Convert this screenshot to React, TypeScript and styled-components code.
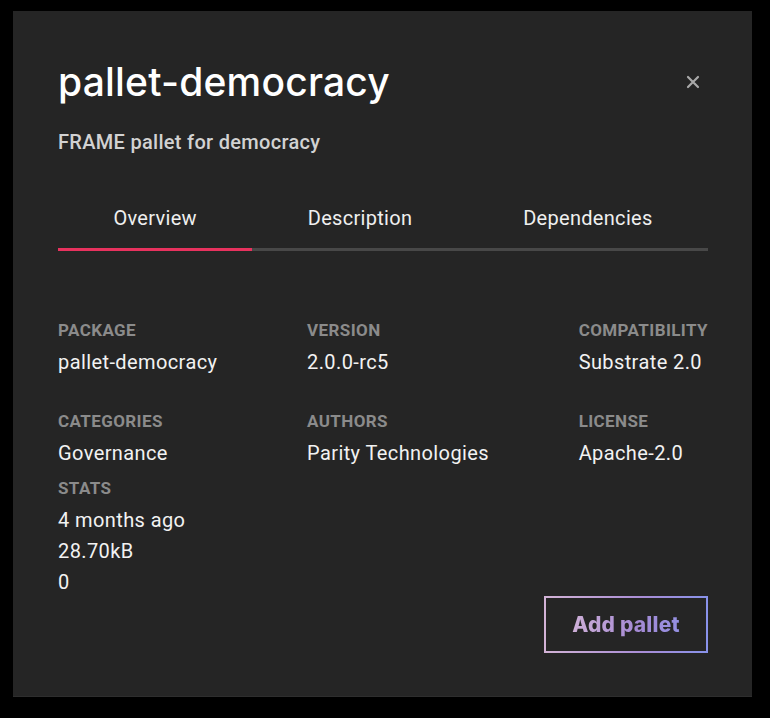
import React, { useState } from "react";
import styled, { createGlobalStyle } from "styled-components";

const GlobalStyle = createGlobalStyle`
  html, body {
    margin: 0;
    padding: 0;
    background: #000;
  }
  * {
    box-sizing: border-box;
  }
`;

const tabs = ["Overview", "Description", "Dependencies"];

const fields = [
  { label: "Package", value: "pallet-democracy" },
  { label: "Version", value: "2.0.0-rc5" },
  { label: "Compatibility", value: "Substrate 2.0" },
  { label: "Categories", value: "Governance" },
  { label: "Authors", value: "Parity Technologies" },
  { label: "License", value: "Apache-2.0" },
];

const stats = ["4 months ago", "28.70kB", "0"];

const App: React.FC = () => {
  const [active, setActive] = useState(0);

  return (
    <Page>
      <GlobalStyle />
      <Modal>
        <Header>
          <Title>pallet-democracy</Title>
          <CloseButton aria-label="close">
            <svg width="14" height="14" viewBox="0 0 14 14">
              <path
                d="M2 2 L12 12 M12 2 L2 12"
                stroke="#a9a9a9"
                strokeWidth="2.2"
                strokeLinecap="round"
              />
            </svg>
          </CloseButton>
        </Header>
        <Subtitle>FRAME pallet for democracy</Subtitle>

        <TabBar>
          {tabs.map((t, i) => (
            <Tab key={t} $active={i === active} onClick={() => setActive(i)}>
              {t}
            </Tab>
          ))}
        </TabBar>

        <InfoGrid>
          {fields.map((f) => (
            <Field key={f.label}>
              <FieldLabel>{f.label}</FieldLabel>
              <FieldValue>{f.value}</FieldValue>
            </Field>
          ))}
        </InfoGrid>

        <Footer>
          <Field>
            <FieldLabel>Stats</FieldLabel>
            {stats.map((s) => (
              <FieldValue key={s}>{s}</FieldValue>
            ))}
          </Field>
          <AddButton>
            <ButtonText>Add pallet</ButtonText>
          </AddButton>
        </Footer>
      </Modal>
    </Page>
  );
};

export default App;

// Styled Components
const Page = styled.div`
  width: 770px;
  height: 718px;
  padding: 11px 18px 21px 13px;
  background: #000;
`;

const Modal = styled.div`
  display: flex;
  flex-direction: column;
  width: 739px;
  height: 686px;
  background: #252525;
  border-bottom: 1px solid #2e2e2e;
  padding: 45px 44px 43px 45px;
  font-family: Roboto, "Liberation Sans", sans-serif;
`;

const Header = styled.div`
  display: flex;
  justify-content: space-between;
  align-items: center;
`;

const Title = styled.h1`
  margin: 0;
  font-family: Inter, "Noto Sans", sans-serif;
  font-size: 39px;
  font-weight: 500;
  letter-spacing: 0.2px;
  line-height: 52px;
  color: #ffffff;
`;

const CloseButton = styled.button`
  display: flex;
  align-items: center;
  justify-content: center;
  width: 28px;
  height: 28px;
  margin-right: 1px;
  padding: 0;
  border: none;
  background: transparent;
  cursor: pointer;
`;

const Subtitle = styled.div`
  margin-top: 22px;
  font-size: 20px;
  font-weight: 500;
  letter-spacing: 0.3px;
  color: #d2d2d2;
  line-height: 24px;
`;

const TabBar = styled.div`
  display: flex;
  margin-top: 39px;
  border-bottom: 3px solid #484848;
`;

const Tab = styled.button<{ $active: boolean }>`
  flex: 1 1 auto;
  padding: 13px 0 18px;
  margin-bottom: -3px;
  border: none;
  border-bottom: 3px solid ${(p) => (p.$active ? "#e8325e" : "transparent")};
  background: transparent;
  font-family: Roboto, "Liberation Sans", sans-serif;
  font-size: 20px;
  letter-spacing: 0.3px;
  line-height: 24px;
  color: #efefef;
  cursor: pointer;
`;

const InfoGrid = styled.div`
  display: grid;
  grid-template-columns: auto auto auto;
  justify-content: space-between;
  row-gap: 35px;
  margin-top: 67px;
`;

const Field = styled.div`
  display: flex;
  flex-direction: column;
  gap: 7px;
`;

const FieldLabel = styled.div`
  margin-bottom: 1px;
  font-size: 17px;
  font-weight: 700;
  letter-spacing: 0.4px;
  text-transform: uppercase;
  color: #8b8b8b;
  line-height: 24px;
`;

const FieldValue = styled.div`
  font-size: 20px;
  letter-spacing: 0.4px;
  color: #f2f2f2;
  line-height: 24px;
`;

const Footer = styled.div`
  flex: 1;
  display: flex;
  justify-content: space-between;
  align-items: flex-start;
  margin-top: 11px;
`;

const AddButton = styled.button`
  align-self: flex-end;
  width: 164px;
  height: 57px;
  border: 2px solid transparent;
  background:
    linear-gradient(#252525, #252525) padding-box,
    linear-gradient(90deg, #d3b3d6, #a98dd6 60%, #8892ea) border-box;
  cursor: pointer;
`;

const ButtonText = styled.span`
  font-family: Inter, "Noto Sans", sans-serif;
  font-size: 21px;
  font-weight: 800;
  letter-spacing: 0.2px;
  background: linear-gradient(90deg, #cfb0d8, #a58ad4 60%, #9490e2);
  -webkit-background-clip: text;
  background-clip: text;
  color: transparent;
`;
